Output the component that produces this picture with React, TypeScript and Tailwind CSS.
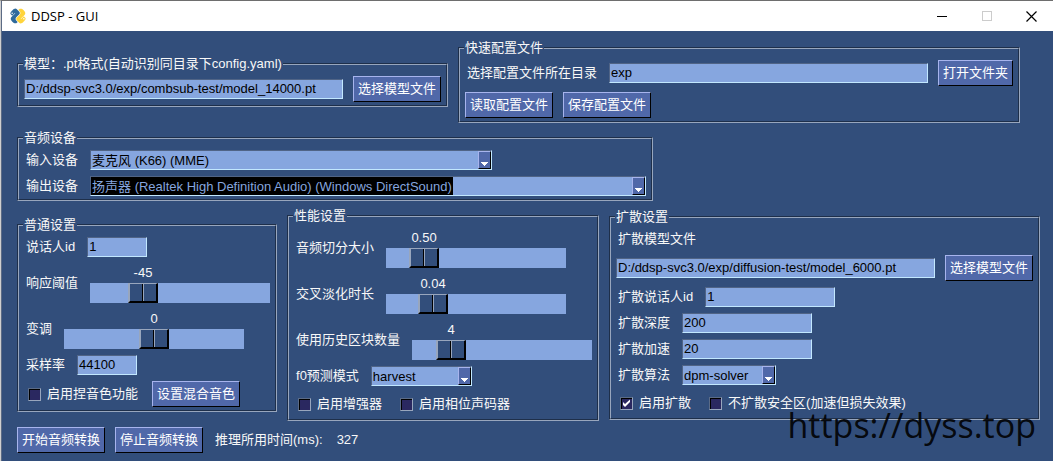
import { useState } from "react";
import type { ReactNode } from "react";

const sunken =
  "border border-t-[#506486] border-l-[#506486] border-r-[#c2e8ff] border-b-[#c2e8ff] bg-[#86a6df]";

const pythonHalf =
  "M14.25.18l.9.2.73.26.59.3.45.32.34.34.25.34.16.33.1.3.04.26.02.2-.01.13V8.5l-.05.63-.13.55-.21.46-.26.38-.3.31-.33.25-.35.19-.35.14-.33.1-.3.07-.26.04-.21.02H8.77l-.69.05-.59.14-.5.22-.41.27-.33.32-.27.35-.2.36-.15.37-.1.35-.07.32-.04.27-.02.21v3.06H3.17l-.21-.03-.28-.07-.32-.12-.35-.18-.36-.26-.36-.36-.35-.46-.32-.59-.28-.73-.21-.88-.14-1.05-.05-1.23.06-1.22.16-1.04.24-.87.32-.71.36-.57.4-.44.42-.33.42-.24.4-.16.36-.1.32-.05.24-.01h.16l.06.01h8.16v-.83H6.18l-.01-2.75-.02-.37.05-.34.11-.31.17-.28.25-.26.31-.23.38-.2.44-.18.51-.15.58-.12.64-.1.71-.06.77-.04.84-.02 1.27.05zm-6.3 1.98l-.23.33-.08.41.08.41.23.34.33.22.41.09.41-.09.33-.22.23-.34.08-.41-.08-.41-.23-.33-.33-.22-.41-.09-.41.09z";

function TitleBar() {
  return (
    <header className="flex h-[30px] items-center bg-white pl-2 text-black">
      <svg viewBox="0 0 24 24" className="size-4" aria-hidden="true">
        <g transform="rotate(-45 12 12)">
          <path fill="#2f6a9c" d={pythonHalf} />
          <path fill="#ffd43b" transform="rotate(180 12 12)" d={pythonHalf} />
        </g>
      </svg>
      <h1 className="ml-[5px] flex-1 font-['Open_Sans','Noto_Sans',sans-serif] text-[13px]">DDSP - GUI</h1>
      <button type="button" aria-label="最小化" className="grid h-full w-[45px] place-items-center">
        <svg viewBox="0 0 11 11" className="size-[11px]" shapeRendering="crispEdges">
          <path d="M0 5.5h10" stroke="#000" />
        </svg>
      </button>
      <button type="button" aria-label="最大化" disabled className="grid h-full w-[45px] place-items-center">
        <svg viewBox="0 0 11 11" className="size-[11px]" shapeRendering="crispEdges">
          <path d="M.5.5h9v9h-9z" fill="none" stroke="#ccc" />
        </svg>
      </button>
      <button type="button" aria-label="关闭" className="grid h-full w-[43px] place-items-center">
        <svg viewBox="0 0 11 11" className="size-[11px]">
          <path d="M.5.5l10 10M10.5.5l-10 10" stroke="#000" strokeWidth="1.2" />
        </svg>
      </button>
    </header>
  );
}

// Grooved frame: the fieldset draws the outer line, the inner div the second one
function Frame({ title, children }: { title: string; children: ReactNode }) {
  return (
    <fieldset className="min-w-0 border border-t-[#1e2f4a] border-r-[#98a6bd] border-b-[#98a6bd] border-l-[#1e2f4a]">
      <legend className="relative ml-[5px] h-0 leading-[0]">
        <span className="bg-[#324e7b] px-px whitespace-nowrap">{title}</span>
      </legend>
      <div className="flex flex-col items-start gap-1.5 border border-t-[#98a6bd] border-r-[#1e2f4a] border-b-[#1e2f4a] border-l-[#98a6bd] px-[5px] pt-[11px] pb-[3px]">
        {children}
      </div>
    </fieldset>
  );
}

function Row({ children }: { children: ReactNode }) {
  return <div className="flex items-center gap-2.5">{children}</div>;
}

function Field({ label, children }: { label: string; children: ReactNode }) {
  return (
    <label className="flex items-center gap-2.5">
      <span className="px-0.5 whitespace-nowrap">{label}</span>
      {children}
    </label>
  );
}

function TextInput({ value, width, label }: { value: string; width: string; label?: string }) {
  return (
    <input
      type="text"
      aria-label={label}
      defaultValue={value}
      className={`h-5 px-px text-black outline-none ${sunken} ${width}`}
    />
  );
}

function Button({ children }: { children: ReactNode }) {
  return (
    <button
      type="button"
      className="h-[26px] border border-t-[#a7b4ed] border-r-black border-b-black border-l-[#a7b4ed] bg-[#5068a9] px-1 whitespace-nowrap text-white active:bg-[#324e7b]"
    >
      {children}
    </button>
  );
}

interface ComboProps {
  options: string[];
  width: string;
  highlighted?: boolean;
}

function Combo({ options, width, highlighted }: ComboProps) {
  return (
    <span className={`relative flex h-5 ${sunken} ${width}`}>
      <select
        className={`h-full appearance-none px-px text-[13px] outline-none ${
          highlighted ? "field-sizing-content bg-black text-[#86a6df]" : "w-full text-black"
        }`}
      >
        {options.map((o) => (
          <option key={o}>{o}</option>
        ))}
      </select>
      <span className="pointer-events-none absolute inset-y-0 right-0 flex w-[13px] items-end justify-center border border-t-[#a7b4ed] border-r-black border-b-black border-l-[#a7b4ed] bg-[#5068a9] pb-0.5">
        <svg viewBox="0 0 7 4" className="h-1 w-[7px]" shapeRendering="crispEdges">
          <path d="M0 0h7L3.5 4z" fill="#fff" />
        </svg>
      </span>
    </span>
  );
}

interface SliderProps {
  label: string;
  min: number;
  max: number;
  step: number;
  initial: number;
  digits?: number;
}

function Slider({ label, min, max, step, initial, digits = 0 }: SliderProps) {
  const [value, setValue] = useState(initial);
  // 180px track minus the 30px thumb
  const left = Math.round(((value - min) / (max - min)) * 150);

  return (
    <Field label={label}>
      <span className="flex w-[180px] flex-col">
        <output className="w-[30px] text-center" style={{ marginLeft: left }}>
          {value.toFixed(digits)}
        </output>
        <input
          type="range"
          min={min}
          max={max}
          step={step}
          value={value}
          onChange={(e) => setValue(Number(e.target.value))}
          className="h-5 w-full appearance-none bg-[#86a6df] outline-none [&::-webkit-slider-thumb]:h-5 [&::-webkit-slider-thumb]:w-[30px] [&::-webkit-slider-thumb]:appearance-none [&::-webkit-slider-thumb]:border-t [&::-webkit-slider-thumb]:border-r-2 [&::-webkit-slider-thumb]:border-b-2 [&::-webkit-slider-thumb]:border-l-2 [&::-webkit-slider-thumb]:border-solid [&::-webkit-slider-thumb]:border-t-[#98a6bd] [&::-webkit-slider-thumb]:border-r-black [&::-webkit-slider-thumb]:border-b-black [&::-webkit-slider-thumb]:border-l-[#98a6bd] [&::-webkit-slider-thumb]:bg-[linear-gradient(90deg,#324e7b_12px,#000_12px,#000_13px,#98a6bd_13px,#98a6bd_14px,#324e7b_14px)]"
        />
      </span>
    </Field>
  );
}

function Check({ label, checked }: { label: string; checked?: boolean }) {
  return (
    <label className="flex h-6 items-center gap-1.5 px-1 whitespace-nowrap">
      <span className="grid size-[13px]">
        <input
          type="checkbox"
          defaultChecked={checked}
          className="peer col-start-1 row-start-1 size-[13px] appearance-none border border-t-[#5b6b86] border-r-[#98a6bd] border-b-[#98a6bd] border-l-[#5b6b86] bg-[#2a2860] shadow-[inset_1px_1px_#000]"
        />
        <svg
          viewBox="0 0 13 13"
          className="pointer-events-none invisible z-10 col-start-1 row-start-1 size-[13px] peer-checked:visible"
        >
          <path d="M3 5v3l2 2 5-5V2.500L5 7z" fill="#fff" />
        </svg>
      </span>
      {label}
    </label>
  );
}

export default function App() {
  return (
    <div className="relative flex min-h-screen flex-col overflow-hidden border-t border-l border-t-[#6e6e6e] border-l-[#cfcfcf] bg-[#324e7b] font-['Liberation_Sans','Noto_Sans_CJK_SC',sans-serif] text-[13px] leading-5 text-[#f8f8f8]">
      <div className="flex flex-1 flex-col border-l border-[#5c6b85]">
        <TitleBar />
        <main className="flex flex-col items-start gap-3.5 px-[15px] pt-4">
          <div className="flex items-center gap-2.5">
            <Frame title="模型：.pt格式(自动识别同目录下config.yaml)">
              <Row>
                <TextInput
                  label="模型文件"
                  value="D:/ddsp-svc3.0/exp/combsub-test/model_14000.pt"
                  width="w-[319px]"
                />
                <Button>选择模型文件</Button>
              </Row>
            </Frame>
            <Frame title="快速配置文件">
              <Row>
                <Field label="选择配置文件所在目录">
                  <TextInput value="exp" width="w-[319px]" />
                </Field>
                <Button>打开文件夹</Button>
              </Row>
              <Row>
                <Button>读取配置文件</Button>
                <Button>保存配置文件</Button>
              </Row>
            </Frame>
          </div>

          <Frame title="音频设备">
            <Field label="输入设备">
              <Combo options={["麦克风 (K66) (MME)"]} width="w-[402px]" />
            </Field>
            <Field label="输出设备">
              <Combo
                options={["扬声器 (Realtek High Definition Audio) (Windows DirectSound)"]}
                width="w-[556px]"
                highlighted
              />
            </Field>
          </Frame>

          <div className="flex items-center gap-2.5">
            <Frame title="普通设置">
              <Field label="说话人id">
                <TextInput value="1" width="w-[60px]" />
              </Field>
              <Slider label="响应阈值" min={-60} max={0} step={1} initial={-45} />
              <Slider label="变调" min={-24} max={24} step={1} initial={0} />
              <Field label="采样率">
                <TextInput value="44100" width="w-[60px]" />
              </Field>
              <Row>
                <Check label="启用捏音色功能" />
                <Button>设置混合音色</Button>
              </Row>
            </Frame>

            <Frame title="性能设置">
              <Slider label="音频切分大小" min={0.05} max={3} step={0.01} initial={0.5} digits={2} />
              <Slider label="交叉淡化时长" min={0.01} max={0.15} step={0.01} initial={0.04} digits={2} />
              <Slider label="使用历史区块数量" min={1} max={20} step={1} initial={4} />
              <Field label="f0预测模式">
                <Combo options={["harvest", "parselmouth", "dio", "crepe"]} width="w-[101px]" />
              </Field>
              <Row>
                <Check label="启用增强器" />
                <Check label="启用相位声码器" />
              </Row>
            </Frame>

            <Frame title="扩散设置">
              <p className="px-0.5">扩散模型文件</p>
              <Row>
                <TextInput
                  label="扩散模型文件"
                  value="D:/ddsp-svc3.0/exp/diffusion-test/model_6000.pt"
                  width="w-[319px]"
                />
                <Button>选择模型文件</Button>
              </Row>
              <Field label="扩散说话人id">
                <TextInput value="1" width="w-[130px]" />
              </Field>
              <Field label="扩散深度">
                <TextInput value="200" width="w-[130px]" />
              </Field>
              <Field label="扩散加速">
                <TextInput value="20" width="w-[130px]" />
              </Field>
              <Field label="扩散算法">
                <Combo options={["dpm-solver", "pndm", "ddim"]} width="w-[94px]" />
              </Field>
              <Row>
                <Check label="启用扩散" checked />
                <Check label="不扩散安全区(加速但损失效果)" />
              </Row>
            </Frame>
          </div>
        </main>

        <footer className="flex items-center gap-2.5 px-[15px] pt-1.5 pb-2">
          <Button>开始音频转换</Button>
          <Button>停止音频转换</Button>
          <span className="px-0.5">推理所用时间(ms):</span>
          <span className="px-0.5">327</span>
        </footer>
      </div>

      <p className="pointer-events-none absolute right-[17px] bottom-4 font-['Open_Sans','Noto_Sans',sans-serif] text-[34px] leading-10 text-black/90">
        https://dyss.top
      </p>
    </div>
  );
}
